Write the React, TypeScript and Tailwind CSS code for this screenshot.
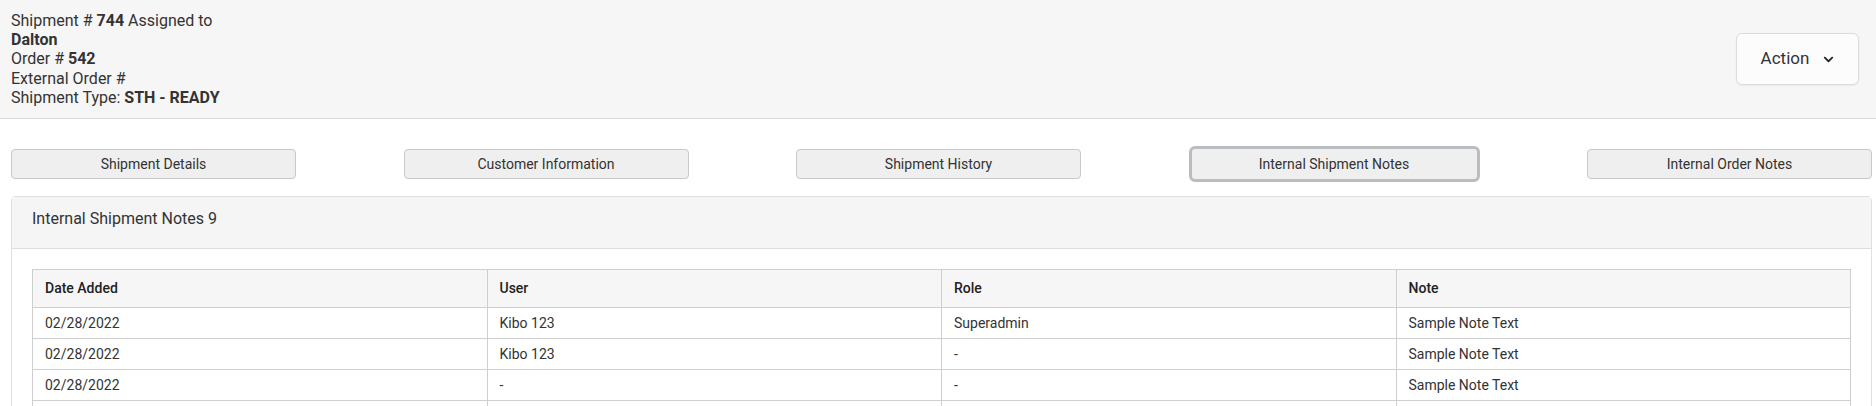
import { FaChevronDown } from "react-icons/fa";

const tabs = [
  "Shipment Details",
  "Customer Information",
  "Shipment History",
  "Internal Shipment Notes",
  "Internal Order Notes",
];

const notes = [
  { date: "02/28/2022", user: "Kibo 123", role: "Superadmin", note: "Sample Note Text" },
  { date: "02/28/2022", user: "Kibo 123", role: "-", note: "Sample Note Text" },
  { date: "02/28/2022", user: "-", role: "-", note: "Sample Note Text" },
  // next row sits below the fold
  { date: "", user: "", role: "", note: "" },
];

export default function App() {
  const active = "Internal Shipment Notes";

  return (
    <div className="h-[406px] overflow-hidden bg-white font-['Roboto',sans-serif] text-[#333]">
      <header className="flex h-[119px] items-center justify-between border-b border-[#d9d9d9] bg-[#f6f6f6] pl-[11px] pr-[17px]">
        <div className="text-[16px] leading-[19.2px]">
          <p>
            Shipment # <b className="font-bold">744</b> Assigned to
          </p>
          <p className="font-bold">Dalton</p>
          <p>
            Order # <b className="font-bold">542</b>
          </p>
          <p>External Order #</p>
          <p>
            Shipment Type: <b className="font-bold">STH - READY</b>
          </p>
        </div>
        <button className="flex h-[52px] w-[123px] items-center justify-center gap-[14px] rounded-[6px] border border-[#dcdcdc] bg-[#fdfcfc] text-[17px] text-[#333] shadow-[0_1px_2px_rgba(0,0,0,0.05)]">
          Action
          <FaChevronDown size={11} className="text-[#222]" />
        </button>
      </header>

      <div className="pl-[11px] pr-[4px]">
        <nav className="mt-[30px] flex justify-between">
          {tabs.map((tab) =>
            tab === active ? (
              <button
                key={tab}
                className="-my-[3px] h-[36px] w-[291px] rounded-[6px] border-[3px] border-[#b9bcc0] bg-[#efefef] text-[14px] text-[#333]"
              >
                {tab}
              </button>
            ) : (
              <button
                key={tab}
                className="h-[30px] w-[285px] rounded-[4px] border border-[#c9c9c9] bg-[#efefef] text-[14px] text-[#333]"
              >
                {tab}
              </button>
            ),
          )}
        </nav>

        <section className="mt-[17px] rounded-t-[4px] border border-[#e0e0e0]">
          <div className="h-[52px] border-b border-[#dedede] bg-[#f5f5f5] px-[20px] pt-[12px] text-[16px] leading-[19px]">
            Internal Shipment Notes 9
          </div>
          <div className="p-[20px]">
            <table className="w-full table-fixed border-collapse text-[14px]">
              <thead>
                <tr className="bg-[#f6f6f6]">
                  {["Date Added", "User", "Role", "Note"].map((h) => (
                    <th
                      key={h}
                      className="h-[38px] border border-[#cfcfcf] px-[12px] text-left font-medium text-[#222]"
                    >
                      {h}
                    </th>
                  ))}
                </tr>
              </thead>
              <tbody>
                {notes.map((n, i) => (
                  <tr key={i}>
                    <td className="h-[31px] border border-[#cfcfcf] px-[12px]">{n.date}</td>
                    <td className="h-[31px] border border-[#cfcfcf] px-[12px]">{n.user}</td>
                    <td className="h-[31px] border border-[#cfcfcf] px-[12px]">{n.role}</td>
                    <td className="h-[31px] border border-[#cfcfcf] px-[12px]">{n.note}</td>
                  </tr>
                ))}
              </tbody>
            </table>
          </div>
        </section>
      </div>
    </div>
  );
}
